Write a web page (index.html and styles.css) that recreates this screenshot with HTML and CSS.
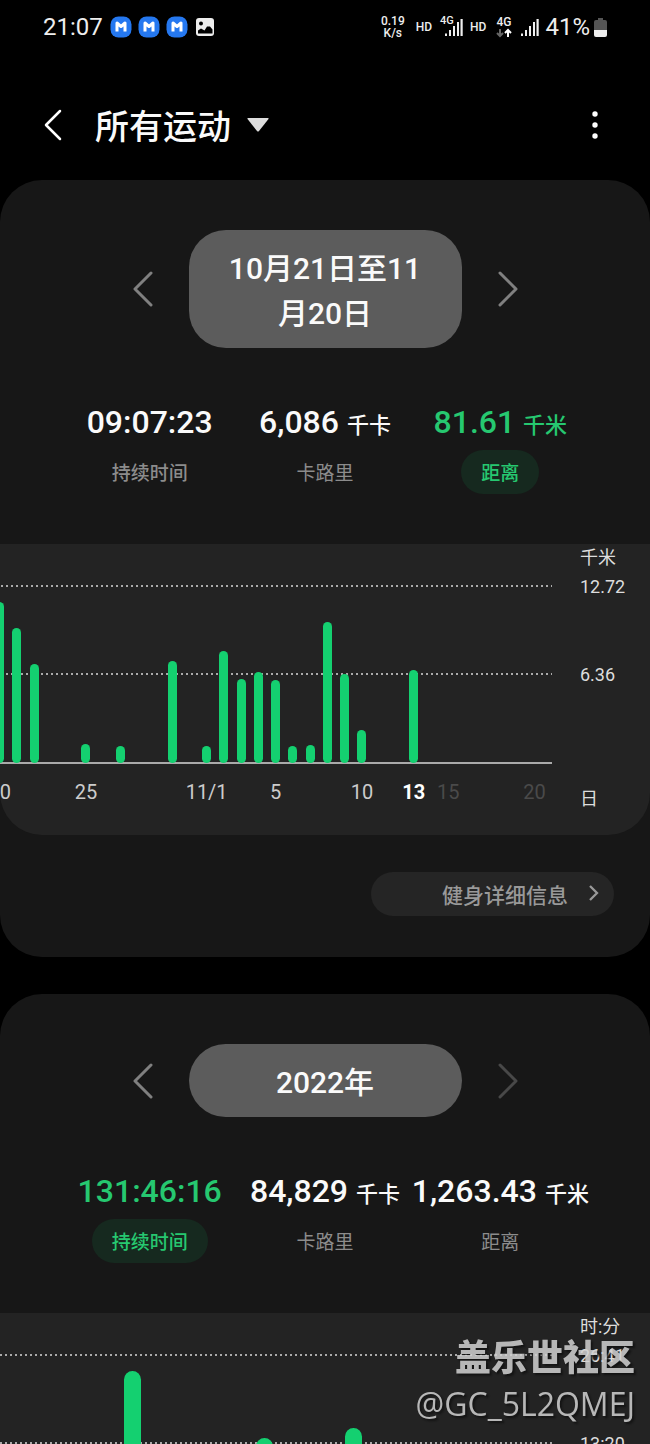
FILE: index.html
```
<!DOCTYPE html>
<html lang="zh-CN">
<head>
  <meta charset="UTF-8" />
  <meta name="viewport" content="width=device-width, initial-scale=1" />
  <title>所有运动</title>
  <link rel="stylesheet" href="styles.css">
</head>
<body>

  <div class="status-bar">
    <div class="status-left">
      <span class="clock">21:07</span>
      <svg class="app-icon" viewBox="0 0 22 22"><rect x="0.500" y="0.500" width="21" height="21" rx="8" fill="#2578f0"/><path d="M7 15.500V7L11 10.500 15 7v8.500" fill="none" stroke="#fff" stroke-width="3" stroke-linejoin="round"/></svg>
      <svg class="app-icon" viewBox="0 0 22 22"><rect x="0.500" y="0.500" width="21" height="21" rx="8" fill="#2578f0"/><path d="M7 15.500V7L11 10.500 15 7v8.500" fill="none" stroke="#fff" stroke-width="3" stroke-linejoin="round"/></svg>
      <svg class="app-icon" viewBox="0 0 22 22"><rect x="0.500" y="0.500" width="21" height="21" rx="8" fill="#2578f0"/><path d="M7 15.500V7L11 10.500 15 7v8.500" fill="none" stroke="#fff" stroke-width="3" stroke-linejoin="round"/></svg>
      <svg class="app-icon" viewBox="0 0 22 22"><rect x="2" y="2" width="18" height="18" rx="3" fill="#eee"/><circle cx="7" cy="7.500" r="2" fill="#000"/><path d="M4 17.500v-3l3-2 3.500 2 2.500-4h3l2.500 3v4z" fill="#000"/></svg>
    </div>
    <div class="status-right">
      <span class="speed">0.19<br>K/s</span>
      <span class="hd">HD</span>
      <span class="network">
        <span class="net-type">4G</span>
        <svg class="signal" viewBox="0 0 19 18"><path d="M1 15.500h2V18H1zM5 12h2v6H5zM9 8h2v10H9zM13 4h2v14h-2zM16.500 1h2.200v17h-2.200z" fill="#eee"/></svg>
      </span>
      <span class="hd">HD</span>
      <span class="data">
        4G
        <svg class="arrows" viewBox="0 0 16 10"><path d="M4 1v7M1 5l3 3 3-3" fill="none" stroke="#666" stroke-width="2"/><path d="M12 9V2M9 5l3-3 3 3" fill="none" stroke="#fff" stroke-width="2"/></svg>
      </span>
      <svg class="signal" viewBox="0 0 19 18"><path d="M1 15.500h2V18H1zM5 12h2v6H5zM9 8h2v10H9zM13 4h2v14h-2zM16.500 1h2.200v17h-2.200z" fill="#eee"/></svg>
      <span class="percent">41%</span>
      <svg class="battery" viewBox="0 0 13 19"><path d="M4 0h5v2h2q2 0 2 2v8H0V4q0-2 2-2h2z" fill="#555"/><path d="M0 12h13v5q0 2-2 2H2q-2 0-2-2z" fill="#eee"/></svg>
    </div>
  </div>

  <header class="app-bar">
    <button class="icon-btn" aria-label="返回">
      <svg width="20" height="32" viewBox="0 0 20 32"><path d="M17 2L3 16l14 14" fill="none" stroke="#fff" stroke-width="2.500" stroke-linecap="round" stroke-linejoin="round"/></svg>
    </button>
    <button class="title">
      <span>所有运动</span>
      <svg width="22" height="14" viewBox="0 0 22 14"><path d="M1 0h20q1 0 .500 1L12 13q-1 1-2 0L.500 1Q0 0 1 0z" fill="#ddd"/></svg>
    </button>
    <button class="icon-btn more" aria-label="更多">
      <svg width="6" height="28" viewBox="0 0 6 28"><circle cx="3" cy="3" r="2.700" fill="#fff"/><circle cx="3" cy="14" r="2.700" fill="#fff"/><circle cx="3" cy="25" r="2.700" fill="#fff"/></svg>
    </button>
  </header>

  <main class="content">
    <section class="card">
      <div class="pager">
        <button class="arrow" aria-label="上一个">
          <svg width="20" height="36" viewBox="0 0 20 36"><path d="M18 2L2 18l16 16"/></svg>
        </button>
        <button class="range">10月21日至11月20日</button>
        <button class="arrow" aria-label="下一个">
          <svg width="20" height="36" viewBox="0 0 20 36"><path d="M2 2l16 16L2 34"/></svg>
        </button>
      </div>

      <div class="stats">
        <button class="stat">
          <span class="value">09:07:23</span>
          <span class="label strong">持续时间</span>
        </button>
        <button class="stat">
          <span class="value">6,086 <small>千卡</small></span>
          <span class="label">卡路里</span>
        </button>
        <button class="stat active">
          <span class="value">81.61 <small>千米</small></span>
          <span class="label">距离</span>
        </button>
      </div>

      <div class="chart">
        <div class="plot">
          <div class="bars days" id="dayBars"></div>
          <div class="ticks days" id="dayTicks"></div>
        </div>
        <div class="scale">
          <span class="unit">千米</span>
          <span class="max">12.72</span>
          <span class="mid">6.36</span>
          <span class="axis-unit">日</span>
        </div>
      </div>

      <div class="card-footer">
        <button class="details">
          健身详细信息
          <svg width="10" height="18" viewBox="0 0 10 18"><path d="M1 1l7 7-7 7" fill="none" stroke="#999" stroke-width="2.300"/></svg>
        </button>
      </div>
    </section>

    <section class="card">
      <div class="pager">
        <button class="arrow" aria-label="上一年">
          <svg width="20" height="36" viewBox="0 0 20 36"><path d="M18 2L2 18l16 16"/></svg>
        </button>
        <button class="range">2022年</button>
        <button class="arrow" aria-label="下一年" disabled>
          <svg width="20" height="36" viewBox="0 0 20 36"><path d="M2 2l16 16L2 34"/></svg>
        </button>
      </div>

      <div class="stats">
        <button class="stat active">
          <span class="value">131:46:16</span>
          <span class="label">持续时间</span>
        </button>
        <button class="stat">
          <span class="value">84,829 <small>千卡</small></span>
          <span class="label">卡路里</span>
        </button>
        <button class="stat">
          <span class="value">1,263.43 <small>千米</small></span>
          <span class="label">距离</span>
        </button>
      </div>

      <div class="chart">
        <div class="plot">
          <div class="bars months" id="monthBars"></div>
        </div>
        <div class="scale">
          <span class="unit">时:分</span>
          <span class="max">26:41</span>
          <span class="mid">13:20</span>
        </div>
      </div>
    </section>
  </main>

  <div class="watermark">
    <strong>盖乐世社区</strong>
    <span>@GC_5L2QMEJ</span>
  </div>

  <script src="charts.js"></script>
</body>
</html>
```
FILE: styles.css
```
* {
  box-sizing: border-box;
}

body {
  margin: 0;
  height: 100vh;
  display: flex;
  flex-direction: column;
  overflow: hidden;
  background: #000;
  color: #fafafa;
  font-family: Roboto, 'Noto Sans CJK SC', sans-serif;
}

button {
  padding: 0;
  border: none;
  background: none;
  color: inherit;
  font: inherit;
  cursor: pointer;
}

svg {
  display: block;
  flex-shrink: 0;
}

/* status bar */
.status-bar {
  flex-shrink: 0;
  height: 54px;
  padding: 0 43px;
  display: flex;
  align-items: center;
  justify-content: space-between;
  color: #eee;
}

.status-left,
.status-right {
  display: flex;
  align-items: center;
}

.status-left {
  gap: 6px;
}

.clock,
.percent {
  font-size: 24px;
  line-height: 28px;
}

.clock {
  margin-right: 1px;
}

.app-icon {
  width: 22px;
  height: 22px;
}

.speed {
  font-size: 12px;
  line-height: 12px;
  font-weight: 500;
  text-align: center;
  margin-right: 11px;
}

.hd {
  font-size: 12px;
  line-height: 14px;
  font-weight: 500;
}

.network {
  position: relative;
  margin: 0 7px 0 12px;
}

.net-type {
  position: absolute;
  left: -4px;
  top: -3px;
  font-size: 11px;
  line-height: 12px;
  font-weight: 500;
}

.signal {
  width: 19px;
  height: 18px;
}

.data {
  margin: 0 8px 0 10px;
  font-size: 12px;
  line-height: 12px;
  font-weight: 500;
}

.arrows {
  width: 16px;
  height: 10px;
}

.percent {
  margin: 0 4px 0 6px;
}

.battery {
  width: 13px;
  height: 19px;
}

/* app bar */
.app-bar {
  flex-shrink: 0;
  height: 126px;
  padding: 16px 43px 0;
  display: flex;
  align-items: center;
}

.icon-btn {
  height: 48px;
  display: flex;
  align-items: center;
}

.title {
  margin-left: 32px;
  display: flex;
  align-items: center;
  gap: 16px;
  font-size: 34px;
  line-height: 44px;
  font-weight: 500;
}

.title span {
  padding-top: 4px;
}

.more {
  margin-left: auto;
  padding: 0 9px;
}

/* cards */
.content {
  flex: 1;
  min-height: 0;
  overflow-y: auto;
  scrollbar-width: none;
  display: flex;
  flex-direction: column;
  gap: 37px;
}

.card {
  flex-shrink: 0;
  padding-top: 50px;
  border-radius: 42px;
  background: #171717;
}

.pager {
  display: flex;
  align-items: center;
  justify-content: center;
  gap: 16px;
}

.arrow {
  width: 60px;
  height: 60px;
  display: flex;
  align-items: center;
  justify-content: center;
}

.arrow path {
  fill: none;
  stroke: #808080;
  stroke-width: 3;
  stroke-linecap: round;
  stroke-linejoin: round;
}

.arrow:disabled path {
  stroke: #484848;
}

.range {
  width: 42%;
  padding: 16px 36px 12px;
  border-radius: 37px;
  background: #5c5c5c;
  font-size: 30px;
  line-height: 45px;
  font-weight: 500;
  word-break: break-all;
}

.stats {
  display: grid;
  grid-template-columns: repeat(3, minmax(0, 1fr));
  align-items: start;
  padding: 52px 62px 50px;
}

.stat {
  display: flex;
  flex-direction: column;
  align-items: center;
  gap: 6px;
}

.value {
  height: 44px;
  font-size: 32px;
  line-height: 44px;
  font-weight: 500;
  white-space: nowrap;
}

.value small {
  font-size: 22px;
  line-height: 24px;
}

.label {
  padding: 4px 20px 0;
  border-radius: 22px;
  color: #8c8c8c;
  font-size: 19px;
  line-height: 40px;
}

.label.strong {
  font-weight: 500;
}

.stat.active {
  color: #26c870;
}

.stat.active .label {
  background: #16291f;
  color: #26c870;
  font-weight: 500;
}

/* charts */
.chart {
  display: grid;
  grid-template-columns: 1fr 98px;
  height: 291px;
  border-radius: 0 0 42px 42px;
  background: #232323;
  overflow: hidden;
}

.plot {
  padding-top: 41px;
  min-width: 0;
}

.bars,
.ticks {
  display: grid;
}

.bars {
  height: 179px;
  align-items: end;
  justify-items: center;
  border-bottom: 2px solid #aaa;
  background:
    linear-gradient(90deg, #aaa 2px, transparent 2px) 0 0 / 5px 2px repeat-x,
    linear-gradient(90deg, #aaa 2px, transparent 2px) 0 88px / 5px 2px repeat-x;
}

/* the first day is half scrolled out on the left */
.days {
  grid-template-columns: repeat(32, minmax(0, 1fr));
  margin-left: -9px;
  padding-right: 9px;
}

.months {
  grid-template-columns: repeat(12, minmax(0, 1fr));
  padding-left: 22px;
}

/* bars reach slightly over the base line */
.bar {
  width: 9px;
  margin-bottom: -1px;
  border-radius: 5px;
  background: #14d070;
}

.months .bar {
  width: 17px;
  border-radius: 9px;
}

.ticks {
  padding-top: 16px;
  color: #ccc;
  font-size: 20px;
  line-height: 24px;
}

.tick {
  display: flex;
  justify-content: center;
  white-space: nowrap;
}

.tick.today {
  color: #fff;
  font-weight: 700;
}

.tick.future {
  color: #4a4a4a;
}

.scale {
  display: flex;
  flex-direction: column;
  padding-left: 28px;
  color: #ddd;
  font-size: 18px;
  line-height: 34px;
}

.scale .unit {
  padding-top: 2px;
  line-height: 24px;
}

.scale .mid {
  margin-top: 54px;
}

.scale .axis-unit {
  margin-top: 90px;
}

.card-footer {
  display: flex;
  justify-content: flex-end;
  padding: 37px 36px 41px;
}

.details {
  width: 243px;
  height: 44px;
  padding: 0 15px;
  display: flex;
  align-items: center;
  justify-content: flex-end;
  gap: 21px;
  border-radius: 22px;
  background: #252525;
  color: #999;
  font-size: 21px;
  font-weight: 500;
}

.watermark {
  position: fixed;
  right: 15px;
  bottom: 19px;
  display: flex;
  flex-direction: column;
  align-items: flex-end;
  color: #d2d2d2;
  opacity: 0.85;
  text-shadow: 2px 2px 2px #111;
  pointer-events: none;
}

.watermark strong {
  padding-bottom: 4px;
  font: 900 36px/48px 'Noto Sans CJK SC', sans-serif;
}

.watermark span {
  font: 32px/42px 'Open Sans', sans-serif;
}
```
FILE: charts.js
```
// distance per day in km, starting on October 20
const days = [
  11.57, 9.7, 7.11, 0, 0, 1.37, 0, 1.22, 0, 0, 7.33, 0, 1.22, 8.05, 6.04, 6.54,
  5.96, 1.22, 1.29, 10.13, 6.4, 2.37, 0, 0, 6.68, 0, 0, 0, 0, 0, 0, 0
];
const dayLabels = { 0: '20', 5: '25', 12: '11/1', 16: '5', 21: '10', 24: '13', 26: '15', 31: '20' };
const today = 24;

// minutes per month
const months = [0, 0, 1456, 0, 0, 850, 0, 941, 0, 0, 0, 0];

function drawBars(id, values, max) {
  document.getElementById(id).innerHTML = values
    .map(v => `<div class="bar" style="height: ${v / max * 100}%"></div>`)
    .join('');
}

function drawTicks(id, count, labels) {
  let html = '';
  for (let i = 0; i < count; i++) {
    const state = i === today ? ' today' : i > today ? ' future' : '';
    html += `<span class="tick${state}">${labels[i] || ''}</span>`;
  }
  document.getElementById(id).innerHTML = html;
}

drawBars('dayBars', days, 12.72);
drawBars('monthBars', months, 1601);
drawTicks('dayTicks', days.length, dayLabels);
```
